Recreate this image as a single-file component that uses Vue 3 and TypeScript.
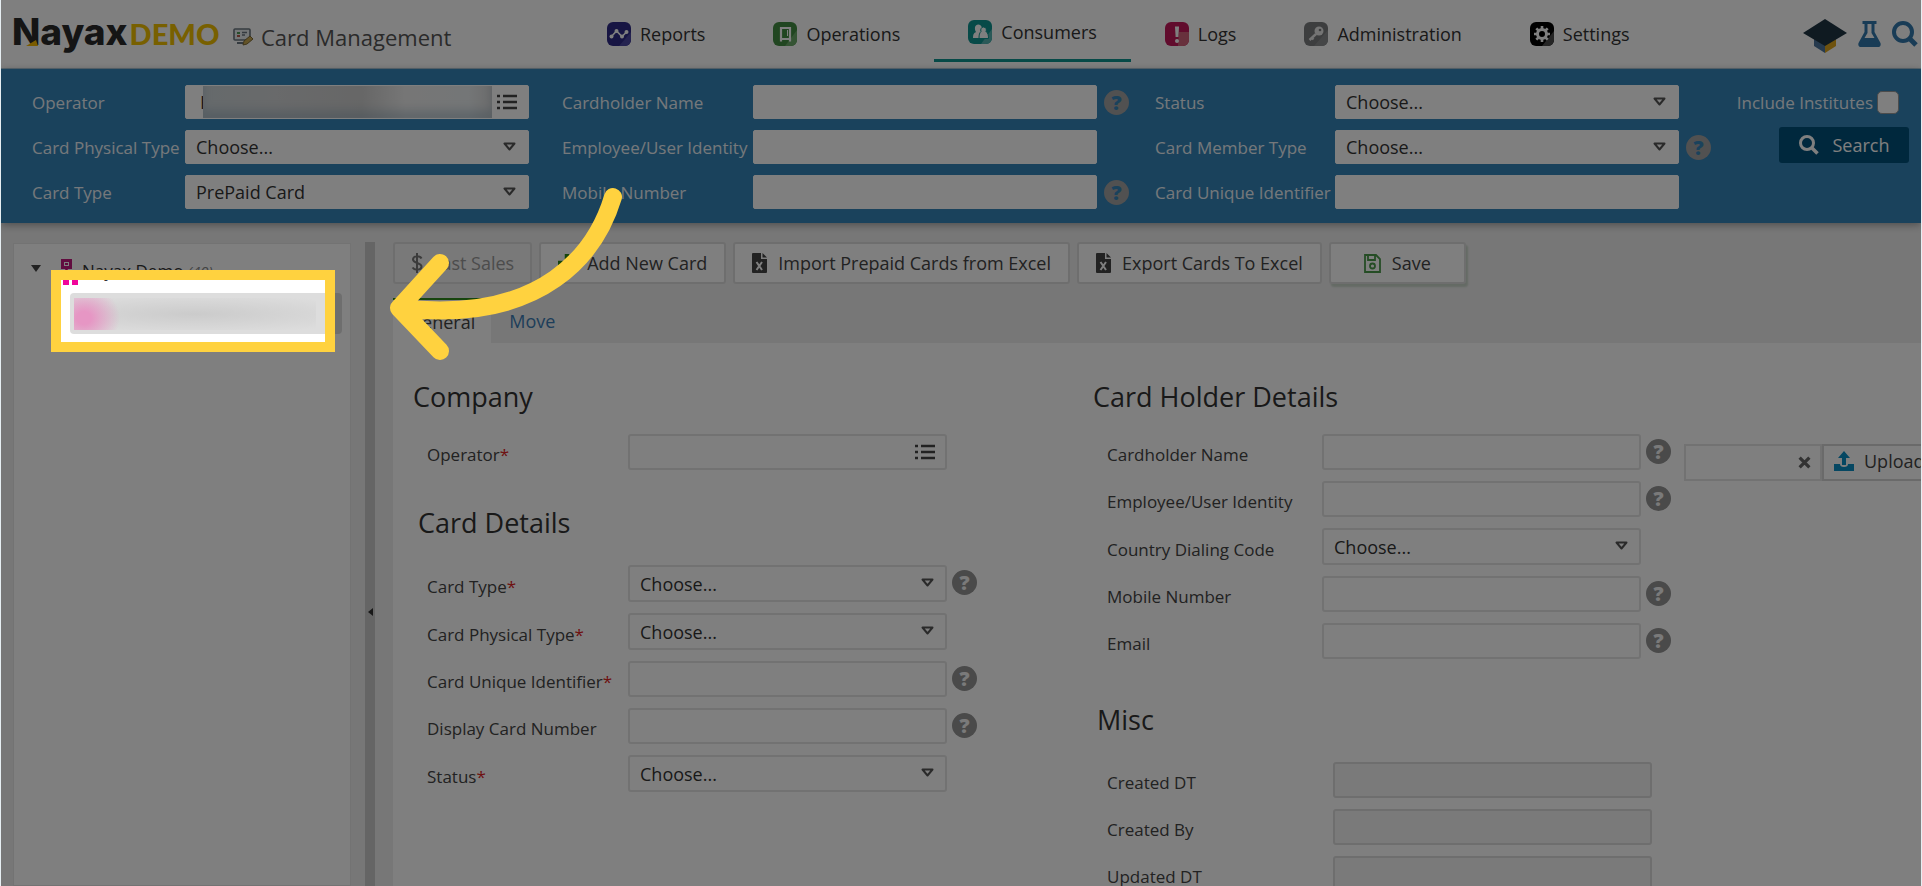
<script setup lang="ts">
import { ref } from 'vue'

interface NavItem { id: string; label: string }
interface Field {
  id: string
  label: string
  kind: 'text' | 'select' | 'lookup'
  help?: boolean
  required?: boolean
  value?: string
}

const nav: NavItem[] = [
  { id: 'reports', label: 'Reports' },
  { id: 'operations', label: 'Operations' },
  { id: 'consumers', label: 'Consumers' },
  { id: 'logs', label: 'Logs' },
  { id: 'administration', label: 'Administration' },
  { id: 'settings', label: 'Settings' },
]
const activeNav = ref('consumers')

const filters: { id: string; fields: Field[] }[] = [
  {
    id: 'card',
    fields: [
      { id: 'f-operator', label: 'Operator', kind: 'lookup' },
      { id: 'f-physical', label: 'Card Physical Type', kind: 'select', value: 'Choose...' },
      { id: 'f-type', label: 'Card Type', kind: 'select', value: 'PrePaid Card' },
    ],
  },
  {
    id: 'holder',
    fields: [
      { id: 'f-name', label: 'Cardholder Name', kind: 'text', help: true },
      { id: 'f-identity', label: 'Employee/User Identity', kind: 'text' },
      { id: 'f-mobile', label: 'Mobile Number', kind: 'text', help: true },
    ],
  },
  {
    id: 'member',
    fields: [
      { id: 'f-status', label: 'Status', kind: 'select', value: 'Choose...' },
      { id: 'f-member', label: 'Card Member Type', kind: 'select', value: 'Choose...', help: true },
      { id: 'f-unique', label: 'Card Unique Identifier', kind: 'text' },
    ],
  },
]

const company: Field[] = [{ id: 'c-operator', label: 'Operator', kind: 'lookup', required: true }]
const details: Field[] = [
  { id: 'd-type', label: 'Card Type', kind: 'select', value: 'Choose...', required: true, help: true },
  { id: 'd-physical', label: 'Card Physical Type', kind: 'select', value: 'Choose...', required: true },
  { id: 'd-unique', label: 'Card Unique Identifier', kind: 'text', required: true, help: true },
  { id: 'd-number', label: 'Display Card Number', kind: 'text', help: true },
  { id: 'd-status', label: 'Status', kind: 'select', value: 'Choose...', required: true },
]
const holder: Field[] = [
  { id: 'h-name', label: 'Cardholder Name', kind: 'text', help: true },
  { id: 'h-identity', label: 'Employee/User Identity', kind: 'text', help: true },
  { id: 'h-country', label: 'Country Dialing Code', kind: 'select', value: 'Choose...' },
  { id: 'h-mobile', label: 'Mobile Number', kind: 'text', help: true },
  { id: 'h-email', label: 'Email', kind: 'text', help: true },
]
const misc: Field[] = [
  { id: 'm-created', label: 'Created DT', kind: 'text' },
  { id: 'm-by', label: 'Created By', kind: 'text' },
  { id: 'm-updated', label: 'Updated DT', kind: 'text' },
]

const leftSections = [
  { id: 'company', title: 'Company', fields: company },
  { id: 'details', title: 'Card Details', fields: details },
]
const rightSections = [
  { id: 'holder', title: 'Card Holder Details', fields: holder },
  { id: 'misc', title: 'Misc', fields: misc },
]
const formColumns = [
  { id: 'left', sections: leftSections },
  { id: 'right', sections: rightSections },
]

const operatorText = ref('H')
const includeInstitutes = ref(false)
</script>

<template>
  <div class="page">
    <header class="top">
      <div class="brand">
        <div class="logo">
          <span class="logo-name">Nayax</span><span class="logo-demo">DEMO</span>
          <svg class="logo-mark" viewBox="0 0 12 6" aria-hidden="true"><path d="M0 6 10 0l2 6z" fill="#f5b800" /></svg>
        </div>
        <svg class="title-icon" viewBox="0 0 20 18" aria-hidden="true">
          <rect x="1" y="1" width="16" height="11" rx="1" fill="#e8eef0" stroke="#6b7780" stroke-width="1.6" />
          <path d="M4 4h3v2H4z" fill="#4f9a56" /><path d="M4 7h3v2H4z" fill="#b65a4a" />
          <path d="M9 4.500h5M9 7h3" stroke="#6b7780" stroke-width="1.400" />
          <path d="M4 15h6" stroke="#6b7780" stroke-width="2" />
          <path d="m10 17 1-4 6-5 3 3-6 5z" fill="#c8a850" stroke="#7d6a35" />
        </svg>
        <h1>Card Management</h1>
      </div>

      <nav class="nav">
        <a v-for="item in nav" :key="item.id" href="#" :class="['nav-item', { active: activeNav === item.id }]" @click.prevent="activeNav = item.id">
          <svg class="nav-icon" viewBox="0 0 24 24" aria-hidden="true">
            <template v-if="item.id === 'reports'">
              <rect width="24" height="24" rx="6" fill="#2e2a86" /><path d="M12 24h6a6 6 0 0 0 6-6v-8z" fill="#4a46a0" />
              <path d="m4.500 14.500 5-5.500 5.500 5.500 5-5" fill="none" stroke="#fff" stroke-width="1.600" />
              <g fill="#fff"><circle cx="4.500" cy="14.500" r="2" /><circle cx="9.500" cy="9" r="2" /><circle cx="15" cy="14.500" r="2" /><circle cx="19.500" cy="10" r="2" /></g>
            </template>
            <template v-else-if="item.id === 'operations'">
              <rect width="24" height="24" rx="6" fill="#438c42" /><path d="M12 24h6a6 6 0 0 0 6-6V8z" fill="#6aa868" />
              <path d="M8 6h9v11H8zM8 17v2.500M17 17v2.500" fill="none" stroke="#fff" stroke-width="2.200" />
              <path d="M14.500 8v6" stroke="#fff" stroke-width="1" />
            </template>
            <template v-else-if="item.id === 'consumers'">
              <rect width="24" height="24" rx="6" fill="#0f9490" /><path d="M13 24h5a6 6 0 0 0 6-6V9z" fill="#54b3b0" />
              <path d="M10.500 4.500a3.500 3.500 0 0 1 3 5L12 18H5c0-4 1-5 3-6-1.500-2-2-7.500 2.500-7.500z" fill="#fff" />
              <path d="M15.500 7a3 3 0 0 1 2.500 4.500c2 1.500 2.500 3.500 2.500 7H11c0-4 .5-5.500 2-7-1-2 .5-4.500 2.500-4.500z" fill="#fff" stroke="#0f9490" />
            </template>
            <template v-else-if="item.id === 'logs'">
              <rect width="24" height="24" rx="6" fill="#c2185b" /><path d="M13 24h5a6 6 0 0 0 6-6v-8H14z" fill="#d0627a" />
              <path d="M10 4.500h4L13.400 15h-2.800z" fill="#fff" /><circle cx="12" cy="19" r="2" fill="#fff" />
            </template>
            <template v-else-if="item.id === 'administration'">
              <rect width="24" height="24" rx="6" fill="#7a7c7e" /><path d="M10 24h8a6 6 0 0 0 6-6V8z" fill="#8b8d8f" />
              <circle cx="15" cy="9" r="4.500" fill="#e8e8e8" /><path d="m12 12-6.500 6M7.500 15.500l2 2" fill="none" stroke="#e8e8e8" stroke-width="2.400" />
              <circle cx="16" cy="8" r="1.300" fill="#7a7c7e" />
            </template>
            <template v-else>
              <rect width="24" height="24" rx="6" fill="#000" /><path d="M12 24h6a6 6 0 0 0 6-6V9z" fill="#4a4a4a" />
              <circle cx="12" cy="12" r="4.500" fill="none" stroke="#fff" stroke-width="3" />
              <path d="M12 4v3M12 17v3M4 12h3M17 12h3M6.300 6.300l2.200 2.200M15.500 15.500l2.200 2.200M6.300 17.700l2.200-2.200M15.500 8.500l2.200-2.200" stroke="#fff" stroke-width="2.600" />
            </template>
          </svg>
          <span>{{ item.label }}</span>
        </a>
      </nav>

      <div class="tools">
        <button type="button" class="tool" aria-label="Academy">
          <svg class="cap" viewBox="0 0 44 34" aria-hidden="true">
            <path d="M11 19v8l11 7V22z" fill="#4d749c" /><path d="M33 19v8l-11 7V22z" fill="#dca51c" />
            <path d="m22 0 22 14-22 13L0 14z" fill="#1e3543" />
          </svg>
        </button>
        <button type="button" class="tool" aria-label="Lab">
          <svg class="flask" viewBox="0 0 22 26" aria-hidden="true">
            <path fill-rule="evenodd" d="M4 0h14v3h-2v8l6 11q1 4-3 4H3q-4 0-3-4l6-11V3H4zM9 3v9l-3 5h10l-3-5V3z" fill="#3379ad" />
          </svg>
        </button>
        <button type="button" class="tool" aria-label="Find">
          <svg class="find" viewBox="0 0 26 26" aria-hidden="true"><circle cx="11" cy="11" r="9" fill="none" stroke="#3379ad" stroke-width="4" /><path d="m17 17 7 7" stroke="#3379ad" stroke-width="5" /></svg>
        </button>
      </div>
    </header>

    <form class="filters" @submit.prevent>
      <div v-for="group in filters" :key="group.id" :class="['filter-group', group.id]">
        <div v-for="f in group.fields" :key="f.id" class="filter-row">
          <label :for="f.id">{{ f.label }}</label>
          <div class="control">
            <select v-if="f.kind === 'select'" :id="f.id"><option>{{ f.value }}</option></select>
            <input v-else-if="f.kind === 'lookup'" :id="f.id" v-model="operatorText" type="text" />
            <input v-else :id="f.id" type="text" />
            <svg v-if="f.kind === 'select'" class="chevron" viewBox="0 0 13 9" aria-hidden="true"><path d="M1.500 1.500h10l-5 6z" fill="none" stroke="#555" stroke-width="2" stroke-linejoin="round" /></svg>
            <span v-if="f.kind === 'lookup'" class="redacted"></span>
            <svg v-if="f.kind === 'lookup'" class="list-icon" viewBox="0 0 20 16" aria-hidden="true"><path d="M0 2h3M0 8h3M0 14h3M6 2h14M6 8h14M6 14h14" stroke="#444" stroke-width="2.400" /></svg>
          </div>
          <button v-if="f.help" type="button" class="help" :aria-label="`Help: ${f.label}`">?</button>
        </div>
      </div>
      <div class="filter-actions">
        <label class="check"><span>Include Institutes</span><input v-model="includeInstitutes" type="checkbox" /></label>
        <button type="submit" class="search">
          <svg viewBox="0 0 20 20" aria-hidden="true"><circle cx="8" cy="8" r="6.500" fill="none" stroke="#fff" stroke-width="3" /><path d="m12.500 12.500 6 6" stroke="#fff" stroke-width="3.600" /></svg>
          <span>Search</span>
        </button>
      </div>
    </form>

    <div class="workspace">
      <aside class="tree">
        <div class="tree-root">
          <svg class="caret" viewBox="0 0 10 7" aria-hidden="true"><path d="M0 0h10L5 7z" fill="#444" /></svg>
          <svg class="org" viewBox="0 0 24 26" aria-hidden="true">
            <path fill-rule="evenodd" d="M7 0h11v10H7zm3 3v4h5V3z" fill="#c2187f" /><path d="M11 4h3v2h-3z" fill="#c2187f" />
            <path d="M12.500 10v8M3 20v-6h18v6" fill="none" stroke="#e6007e" stroke-width="2.500" />
            <path d="M0 19h6v7H0zM9 19h6v7H9zM18 19h6v7h-6z" fill="#f0059a" />
          </svg>
          <span>Nayax Demo <em>(40)</em></span>
        </div>
        <div class="tree-node"><span class="smudge"></span></div>
      </aside>
      <div class="splitter"><svg viewBox="0 0 5 8" aria-hidden="true"><path d="M5 0v8L0 4z" fill="#333" /></svg></div>

      <main class="main">
        <div class="toolbar">
          <button type="button" class="btn last" disabled>
            <svg class="i-dollar" viewBox="0 0 12 20" aria-hidden="true"><path d="M10.500 5.500C9 2.500 2 2.500 2 6.500s8.500 3 8.500 7-7 4-9 1M6 0v20" fill="none" stroke="#777" stroke-width="2" /></svg>Last Sales
          </button>
          <button type="button" class="btn">
            <svg class="i-plus" viewBox="0 0 18 18" aria-hidden="true"><path d="M9 0v18M0 9h18" stroke="#2f8a1c" stroke-width="4.500" /></svg>Add New Card
          </button>
          <button v-for="label in ['Import Prepaid Cards from Excel', 'Export Cards To Excel']" :key="label" type="button" class="btn">
            <svg class="i-file" viewBox="0 0 15 20" aria-hidden="true">
              <path d="M0 1q0-1 1-1h8v6h6v13q0 1-1 1H1q-1 0-1-1z" fill="#444" /><path d="M10.500 0 15 4.500h-4.500z" fill="#444" />
              <path d="m4.500 9 5.500 8M10 9l-5.500 8" stroke="#fff" stroke-width="2" />
            </svg>{{ label }}
          </button>
          <button type="button" class="btn save">
            <svg class="i-save" viewBox="0 0 17 19" aria-hidden="true"><path d="M1 1h11l4 4v13H1zM4 1v5h7V1" fill="none" stroke="#4b9a4b" stroke-width="1.800" /><circle cx="8.500" cy="12" r="2.500" fill="none" stroke="#4b9a4b" stroke-width="1.800" /></svg>Save
          </button>
        </div>

        <div class="tabs" role="tablist">
          <button type="button" role="tab" aria-selected="true" class="tab current">General</button>
          <button type="button" role="tab" aria-selected="false" class="tab">Move</button>
        </div>

        <div class="card-form">
          <div v-for="col in formColumns" :key="col.id" :class="['col', col.id]">
            <section v-for="s in col.sections" :key="s.id" :class="['section', s.id]">
              <h2>{{ s.title }}</h2>
              <div v-for="f in s.fields" :key="f.id" class="field">
                <label :for="f.id">{{ f.label }}<i v-if="f.required">*</i></label>
                <div class="control">
                  <select v-if="f.kind === 'select'" :id="f.id"><option>{{ f.value }}</option></select>
                  <input v-else :id="f.id" type="text" :disabled="s.id === 'misc'" />
                  <svg v-if="f.kind === 'select'" class="chevron" viewBox="0 0 13 9" aria-hidden="true"><path d="M1.500 1.500h10l-5 6z" fill="none" stroke="#555" stroke-width="2" stroke-linejoin="round" /></svg>
                  <svg v-if="f.kind === 'lookup'" class="list-icon" viewBox="0 0 20 16" aria-hidden="true"><path d="M0 2h3M0 8h3M0 14h3M6 2h14M6 8h14M6 14h14" stroke="#444" stroke-width="2.400" /></svg>
                </div>
                <button v-if="f.help" type="button" class="help" :aria-label="`Help: ${f.label}`">?</button>
              </div>
            </section>
          </div>
          <div class="upload">
            <div class="upload-file">
              <input type="text" aria-label="File" />
              <svg class="clear" viewBox="0 0 12 12" aria-hidden="true"><path d="m1.500 1.500 9 9M10.500 1.500l-9 9" stroke="#666" stroke-width="3" /></svg>
            </div>
            <button type="button" class="upload-btn">
              <svg viewBox="0 0 20 20" aria-hidden="true"><path d="M10 0 4 7h4v7h4V7h4z" fill="#0b8fc4" /><path d="M0 13h6q0 3 4 3t4-3h6v7H0z" fill="#0b8fc4" /></svg>Upload
            </button>
          </div>
        </div>
      </main>
    </div>

    <div class="spotlight"></div>
    <svg class="arrow" viewBox="0 0 240 180" aria-hidden="true">
      <path d="M224 17C208 70 157 145 10 128M51 83 10 128l41 43" fill="none" stroke="#ffd23f" stroke-width="18" stroke-linecap="round" stroke-linejoin="round" />
    </svg>
  </div>
</template>

<style>
body { background: #e6eef2; }
</style>

<style scoped>
.page, .page * { box-sizing: border-box; }
.page {
  position: relative;
  display: flex;
  flex-direction: column;
  height: 100vh;
  margin: 0 1px;
  overflow: hidden;
  background: #efefef;
  color: #333;
  font-family: "Open Sans", "Noto Sans", sans-serif;
  font-size: 17px;
}
button, input, select { font: inherit; color: inherit; margin: 0; }
button { cursor: pointer; }
svg { display: block; flex: none; }

.top {
  display: flex;
  align-items: center;
  height: 69px;
  flex: none;
  background: #fff;
  border-bottom: 1px solid #b4cfe0;
}
.brand { display: flex; align-items: center; width: 572px; padding-left: 11px; }
.logo { position: relative; display: flex; flex: none; align-items: baseline; width: 208px; height: 56px; line-height: 52px; }
.logo-name { font-family: Inter, sans-serif; font-size: 37px; font-weight: 800; color: #2a2a2a; }
.logo-demo { margin-left: 2px; font-family: Lato, sans-serif; font-size: 29px; font-weight: 900; color: #f0c000; }
.logo-mark { position: absolute; left: 14px; bottom: 16px; width: 12px; height: 6px; }
.title-icon { width: 20px; height: 18px; margin: 5px 8px 0 13px; }
h1 { margin: 5px 0 0; font-size: 22px; line-height: 32px; font-weight: 400; color: #555; white-space: nowrap; }
.nav { display: flex; align-self: stretch; }
.nav-item {
  display: flex;
  align-items: center;
  gap: 9px;
  height: 62px;
  padding: 6px 34px 0;
  font-size: 18px;
  color: #333;
  text-decoration: none;
}
.nav-item.active { padding-top: 5px; border-bottom: 3px solid #0f9490; }
.nav-icon { width: 24px; height: 24px; }
.tools { display: flex; align-items: center; gap: 11px; margin-left: auto; padding-right: 3px; }
.tool { padding: 0; border: 0; background: none; }
.cap { width: 44px; height: 34px; margin-top: 4px; }
.flask { width: 23px; height: 26px; }
.find { width: 26px; height: 26px; }

.filters {
  position: relative;
  display: flex;
  flex: none;
  padding: 16px 12px 14px 31px;
  background: #3484b8;
  color: #eaf1f6;
  box-shadow: 0 2px 8px rgba(0, 0, 0, .35);
}
.filter-group { display: flex; flex-direction: column; gap: 11px; }
.filter-row { display: flex; align-items: center; height: 34px; white-space: nowrap; }
.filter-row label { flex: none; }
.card { width: 530px; } .card label { width: 153px; }
.holder.filter-group { width: 593px; } .holder label { width: 191px; }
.member { width: 560px; } .member label { width: 180px; }
.control { display: grid; align-items: center; font-size: 18px; }
.control > * { grid-area: 1 / 1; }
.control input, .control select {
  width: 100%;
  padding: 0 10px;
  border: 1px solid #fff;
  border-radius: 2px;
  background: #fff;
  color: #333;
  appearance: none;
  outline: 0;
}
.filter-row .control { width: 344px; }
.filter-row .control input, .filter-row .control select { height: 34px; }
.filter-row .control input { padding-left: 14px; }
.chevron { width: 13px; height: 9px; justify-self: end; margin-right: 13px; margin-bottom: 2px; pointer-events: none; }
.list-icon { width: 20px; height: 16px; justify-self: end; margin-right: 12px; }
.redacted {
  height: 32px;
  margin: 0 37px 0 18px;
  background: linear-gradient(90deg, #ccd4d8, #d2d4d6 25%, #cecece 55%, #ededed 70%, #e8ecee 92%, #d8d8d8);
  box-shadow: inset 0 -8px 8px rgba(120, 150, 170, .35);
}
.help {
  flex: none;
  width: 25px;
  height: 25px;
  padding: 0;
  border: 0;
  border-radius: 50%;
  background: #949494;
  color: #f4f4f4;
  font-size: 20px;
  line-height: 25px;
  font-weight: 800;
  text-align: center;
}
.filter-row .help { margin-left: 7px; background: #a2a2a2; color: #3484b8; }
.filter-actions { display: flex; flex-direction: column; align-items: flex-end; gap: 8px; margin-left: auto; }
.check { display: flex; align-items: center; gap: 4px; height: 34px; margin-right: 10px; white-space: nowrap; }
.check input { width: 22px; height: 23px; appearance: none; border: 1px solid #999; border-radius: 5px; background: #fff; }
.search {
  display: flex;
  align-items: center;
  justify-content: center;
  gap: 14px;
  width: 130px;
  height: 36px;
  padding: 0;
  border: 0;
  border-radius: 3px;
  background: #00507a;
  color: #fff;
  font-size: 18px;
}
.search svg { width: 20px; height: 20px; }

.workspace { display: flex; flex: 1; min-height: 0; padding: 19px 0 0 12px; }
.tree { flex: none; width: 338px; margin-top: 1px; padding: 12px 8px 0 17px; background: #fff; border: 1px solid #e6e6e6; }
.tree-root { display: flex; align-items: center; height: 28px; font-size: 17px; }
.tree-root em { color: #888; font-size: 15px; }
.caret { width: 10px; height: 7px; margin-bottom: 3px; }
.org { width: 24px; height: 26px; margin: 4px 4px 0 13px; }
.tree-node { height: 41px; margin: 9px 0 0 39px; padding: 5px 26px 3px 4px; border-radius: 4px; background: #ddd; }
.smudge {
  display: block;
  height: 32px;
  background:
    radial-gradient(ellipse 36px 32px at 10px 20px, #e696c4 20%, rgba(230, 150, 196, 0)),
    radial-gradient(ellipse 180px 20px at 50% 50%, #cbcbcb, rgba(221, 221, 221, 0)),
    #ddd;
}
.splitter { display: flex; flex: none; align-items: center; justify-content: center; width: 10px; margin: 0 18px 0 14px; background: #cbcbcb; }
.splitter svg { width: 5px; height: 8px; margin-top: 95px; }

.main { display: flex; flex: 1; flex-direction: column; min-width: 0; }
.toolbar { display: flex; flex: none; gap: 7px; }
.btn {
  display: flex;
  align-items: center;
  gap: 11px;
  height: 42px;
  padding: 0 17px;
  border: 2px solid #ddd;
  border-radius: 3px;
  background: #fff;
  color: #444;
  font-size: 18px;
  white-space: nowrap;
}
.btn:disabled { padding: 0 16px; background: #f2f2f2; color: #999; gap: 9px; }
.i-dollar { width: 12px; height: 20px; }
.i-plus { width: 18px; height: 18px; }
.i-file { width: 15px; height: 20px; }
.i-save { width: 17px; height: 19px; }
.btn.save { padding: 0 33px; box-shadow: 2px 3px 2px #c8d4c8; }
.tabs { display: flex; flex: none; align-items: flex-end; height: 59px; }
.tab { height: 45px; padding: 0 18px; border: 0; background: none; color: #3b7cb4; font-size: 18px; }
.tab.current { padding: 0 16px; border-top: 2px solid #2f8a1c; background: #fff; color: #444; }
.card-form {
  display: grid;
  grid-template-columns: minmax(0, 700fr) minmax(0, 591fr) minmax(0, 237fr);
  flex: 1;
  min-height: 0;
  padding-top: 35px;
  background: #fff;
}
h2 { margin: 0 0 18px; font-size: 27px; line-height: 38px; font-weight: 400; color: #333; }
.section + .section { margin-top: 34px; }
.section + .section h2 { margin-bottom: 23px; }
.left { padding-left: 20px; }
.details h2 { padding-left: 5px; }
.misc h2 { padding-left: 4px; }
.col .misc { margin-top: 42px; }
.field { display: flex; align-items: center; padding-left: 14px; white-space: nowrap; }
.field + .field { margin-top: 11px; }
.field label { flex: none; width: 201px; padding-top: 5px; color: #444; }
.field label i { color: #d22; font-style: normal; }
.right .field label { width: 215px; }
.right .misc .field label { width: 226px; }
.field .control { flex: none; width: 319px; }
.field .control input, .field .control select { height: 36px; border: 2px solid #e4e4e4; border-radius: 3px; }
.field .control select { height: 37px; }
.field .control input:disabled { background: #f4f4f4; border-color: #dcdcdc; }
.field .help { margin: 0 0 2px 5px; }
.upload { display: flex; margin-top: 66px; height: 37px; }
.upload-file { display: grid; flex: none; align-items: center; width: 138px; }
.upload-file > * { grid-area: 1 / 1; }
.upload-file input { width: 138px; height: 37px; border: 2px solid #e4e4e4; background: none; }
.clear { width: 13px; height: 13px; justify-self: end; margin-right: 11px; }
.upload-btn { display: flex; flex: none; align-items: center; gap: 10px; width: 130px; padding: 0 10px 4px; border: 2px solid #d4d4d4; background: #fff; color: #444; font-size: 18px; }
.upload-btn svg { width: 20px; height: 20px; }

/* tour step: dims the page around the highlighted tree node */
.spotlight {
  position: absolute;
  left: 50px;
  top: 270px;
  width: 284px;
  height: 82px;
  border: 10px solid #ffd23f;
  box-shadow: 0 0 0 3000px rgba(0, 0, 0, .5);
  pointer-events: none;
}
.arrow { position: absolute; left: 388px; top: 180px; width: 240px; height: 180px; pointer-events: none; }
</style>
